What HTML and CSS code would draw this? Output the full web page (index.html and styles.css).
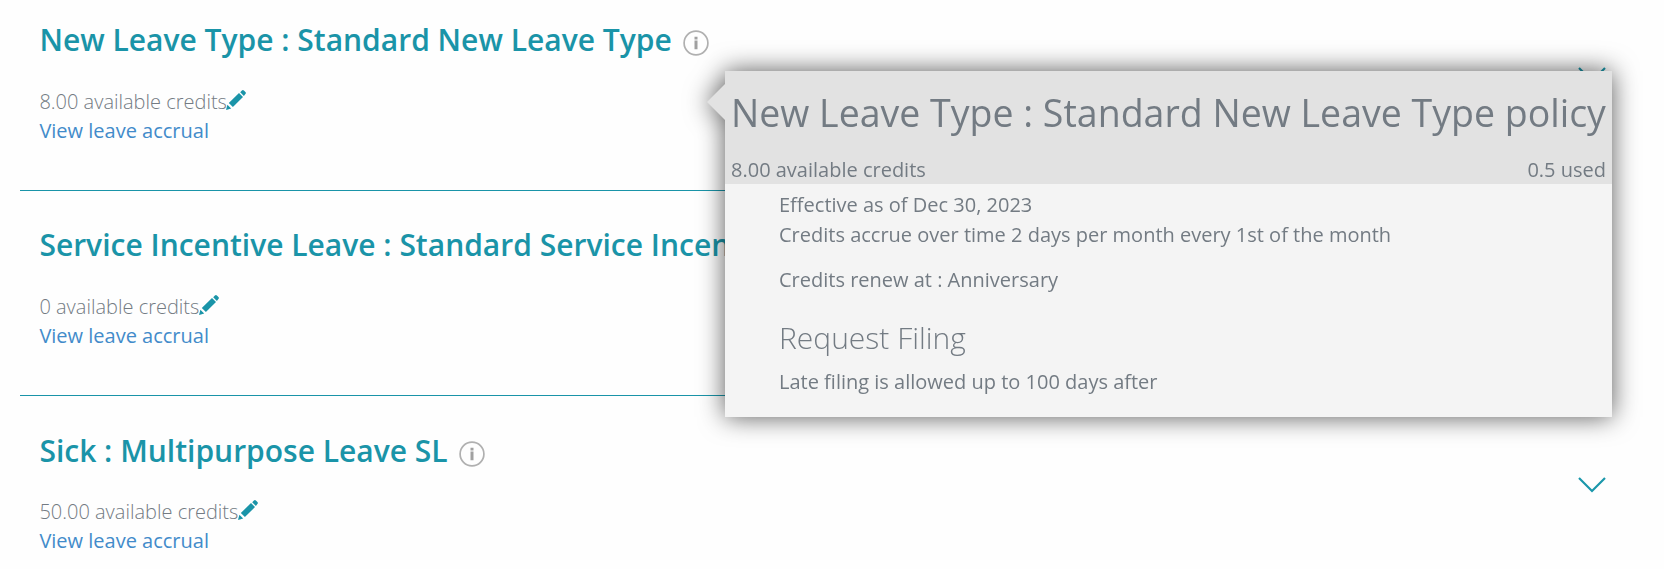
FILE: index.html
```html
<!DOCTYPE html>
<html lang="en">
<head>
  <meta charset="UTF-8">
  <title>Leave Credits</title>
  <link rel="stylesheet" href="styles.css">
</head>
<body>

<svg class="icon-defs">
  <symbol id="pencil" viewBox="0 0 20 20">
    <path d="M0 20l1.4-5.2 3.8 3.8zM2.8 13L13 3.1l4 4L6.9 17.1zM14.2 2.2L15.9.6q1-1 2 0l1.5 1.5q1 1 0 2L17.9 5.9z"/>
  </symbol>
  <symbol id="info" viewBox="0 0 26 26">
    <circle cx="13" cy="13" r="11.9" fill="none" stroke="#b0b0b0" stroke-width="1.7"/>
    <path d="M11.5 6.8h3v2.7h-3zM11.5 10.6h3v8.6h-3z" fill="#a0a0a0"/>
  </symbol>
  <symbol id="chevron" viewBox="0 0 28 16">
    <path d="M1 1l13 13L27 1" fill="none" stroke="#1a97ab" stroke-width="2.2"/>
  </symbol>
</svg>

<div class="leave-list">
  <div class="leave-item">
    <div class="leave-info">
      <h2>New Leave Type : Standard New Leave Type<svg class="info-icon"><use href="#info"/></svg></h2>
      <p class="credits">8.00 available credits<svg class="edit-icon"><use href="#pencil"/></svg></p>
      <a class="accrual-link" href="#">View leave accrual</a>
    </div>
    <svg class="chevron"><use href="#chevron"/></svg>
  </div>

  <div class="leave-item">
    <div class="leave-info">
      <h2>Service Incentive Leave : Standard Service Incentive</h2>
      <p class="credits">0 available credits<svg class="edit-icon"><use href="#pencil"/></svg></p>
      <a class="accrual-link" href="#">View leave accrual</a>
    </div>
    <svg class="chevron"><use href="#chevron"/></svg>
  </div>

  <div class="leave-item">
    <div class="leave-info">
      <h2>Sick : Multipurpose Leave SL<svg class="info-icon"><use href="#info"/></svg></h2>
      <p class="credits">50.00 available credits<svg class="edit-icon"><use href="#pencil"/></svg></p>
      <a class="accrual-link" href="#">View leave accrual</a>
    </div>
    <svg class="chevron"><use href="#chevron"/></svg>
  </div>
</div>

<div class="policy-popover">
  <div class="policy-header">
    <h1>New Leave Type : Standard New Leave Type policy</h1>
    <div class="policy-credits">
      <span>8.00 available credits</span>
      <span>0.5 used</span>
    </div>
  </div>
  <div class="policy-body">
    <p>Effective as of Dec 30, 2023</p>
    <p>Credits accrue over time 2 days per month every 1st of the month</p>
    <p class="renewal">Credits renew at : Anniversary</p>
    <h3>Request Filing</h3>
    <p>Late filing is allowed up to 100 days after</p>
  </div>
</div>

</body>
</html>
```
FILE: styles.css
```css
* {
  box-sizing: border-box;
}
body {
  margin: 0;
  font-family: "Open Sans", sans-serif;
  font-size: 20px;
  color: #737b83;
  background: #fefefe;
  overflow: hidden;
}
h1, h2, h3, p {
  margin: 0;
}
.icon-defs {
  display: none;
}
.leave-list {
  width: 1592px;
  margin-left: 20px;
}
.leave-item {
  display: flex;
  justify-content: space-between;
  height: 205px;
  padding: 33px 6px 0 19.4px;
  border-bottom: 1px solid #1a94a8;
}
.leave-item:first-child {
  height: 191px;
  padding-top: 19px;
}
.leave-item:last-child {
  height: 173px;
  padding-top: 34px;
  border-bottom: none;
}
.leave-info {
  white-space: nowrap;
}
.leave-info h2 {
  display: flex;
  align-items: center;
  height: 40px;
  margin-bottom: 28px;
  font-size: 30px;
  font-weight: 600;
  color: #1a94a8;
}
.leave-item:last-child h2 {
  margin-bottom: 27px;
}
.info-icon {
  width: 26px;
  height: 26px;
  margin: 7px 0 0 11.5px;
}
.credits {
  display: flex;
  height: 29px;
  font-weight: 300;
  line-height: 29px;
}
.edit-icon {
  width: 20px;
  height: 20px;
  margin: 3px 0 0 -0.5px;
  fill: #1a94a8;
}
.accrual-link {
  color: #428bca;
  line-height: 29px;
  text-decoration: none;
}
.chevron {
  width: 28px;
  height: 16px;
  margin-top: 48px;
}
.leave-item:last-child .chevron {
  margin-top: 47px;
}

/* Policy popover */
.policy-popover {
  position: absolute;
  top: 71px;
  left: 725px;
  width: 887px;
  height: 346px;
  background: #f4f4f4;
  filter: drop-shadow(0 0 13px rgba(0, 0, 0, 0.65));
}
.policy-popover::before {
  content: "";
  position: absolute;
  top: 13px;
  left: -18px;
  border: solid transparent;
  border-width: 18px 18px 18px 0;
  border-right-color: #e2e2e2;
}
.policy-header {
  height: 113px;
  padding: 16px 6px 0;
  background: #e2e2e2;
}
.policy-header h1 {
  font-size: 37.5px;
  font-weight: 400;
  line-height: 52px;
  white-space: nowrap;
}
.policy-credits {
  display: flex;
  justify-content: space-between;
  margin-top: 16px;
  line-height: 29px;
}
.policy-body {
  padding: 6px 54px;
  line-height: 30px;
}
.policy-body .renewal {
  margin-top: 15px;
}
.policy-body h3 {
  margin: 22px 0 8px;
  font-size: 30px;
  font-weight: 300;
  line-height: 42px;
}
```
